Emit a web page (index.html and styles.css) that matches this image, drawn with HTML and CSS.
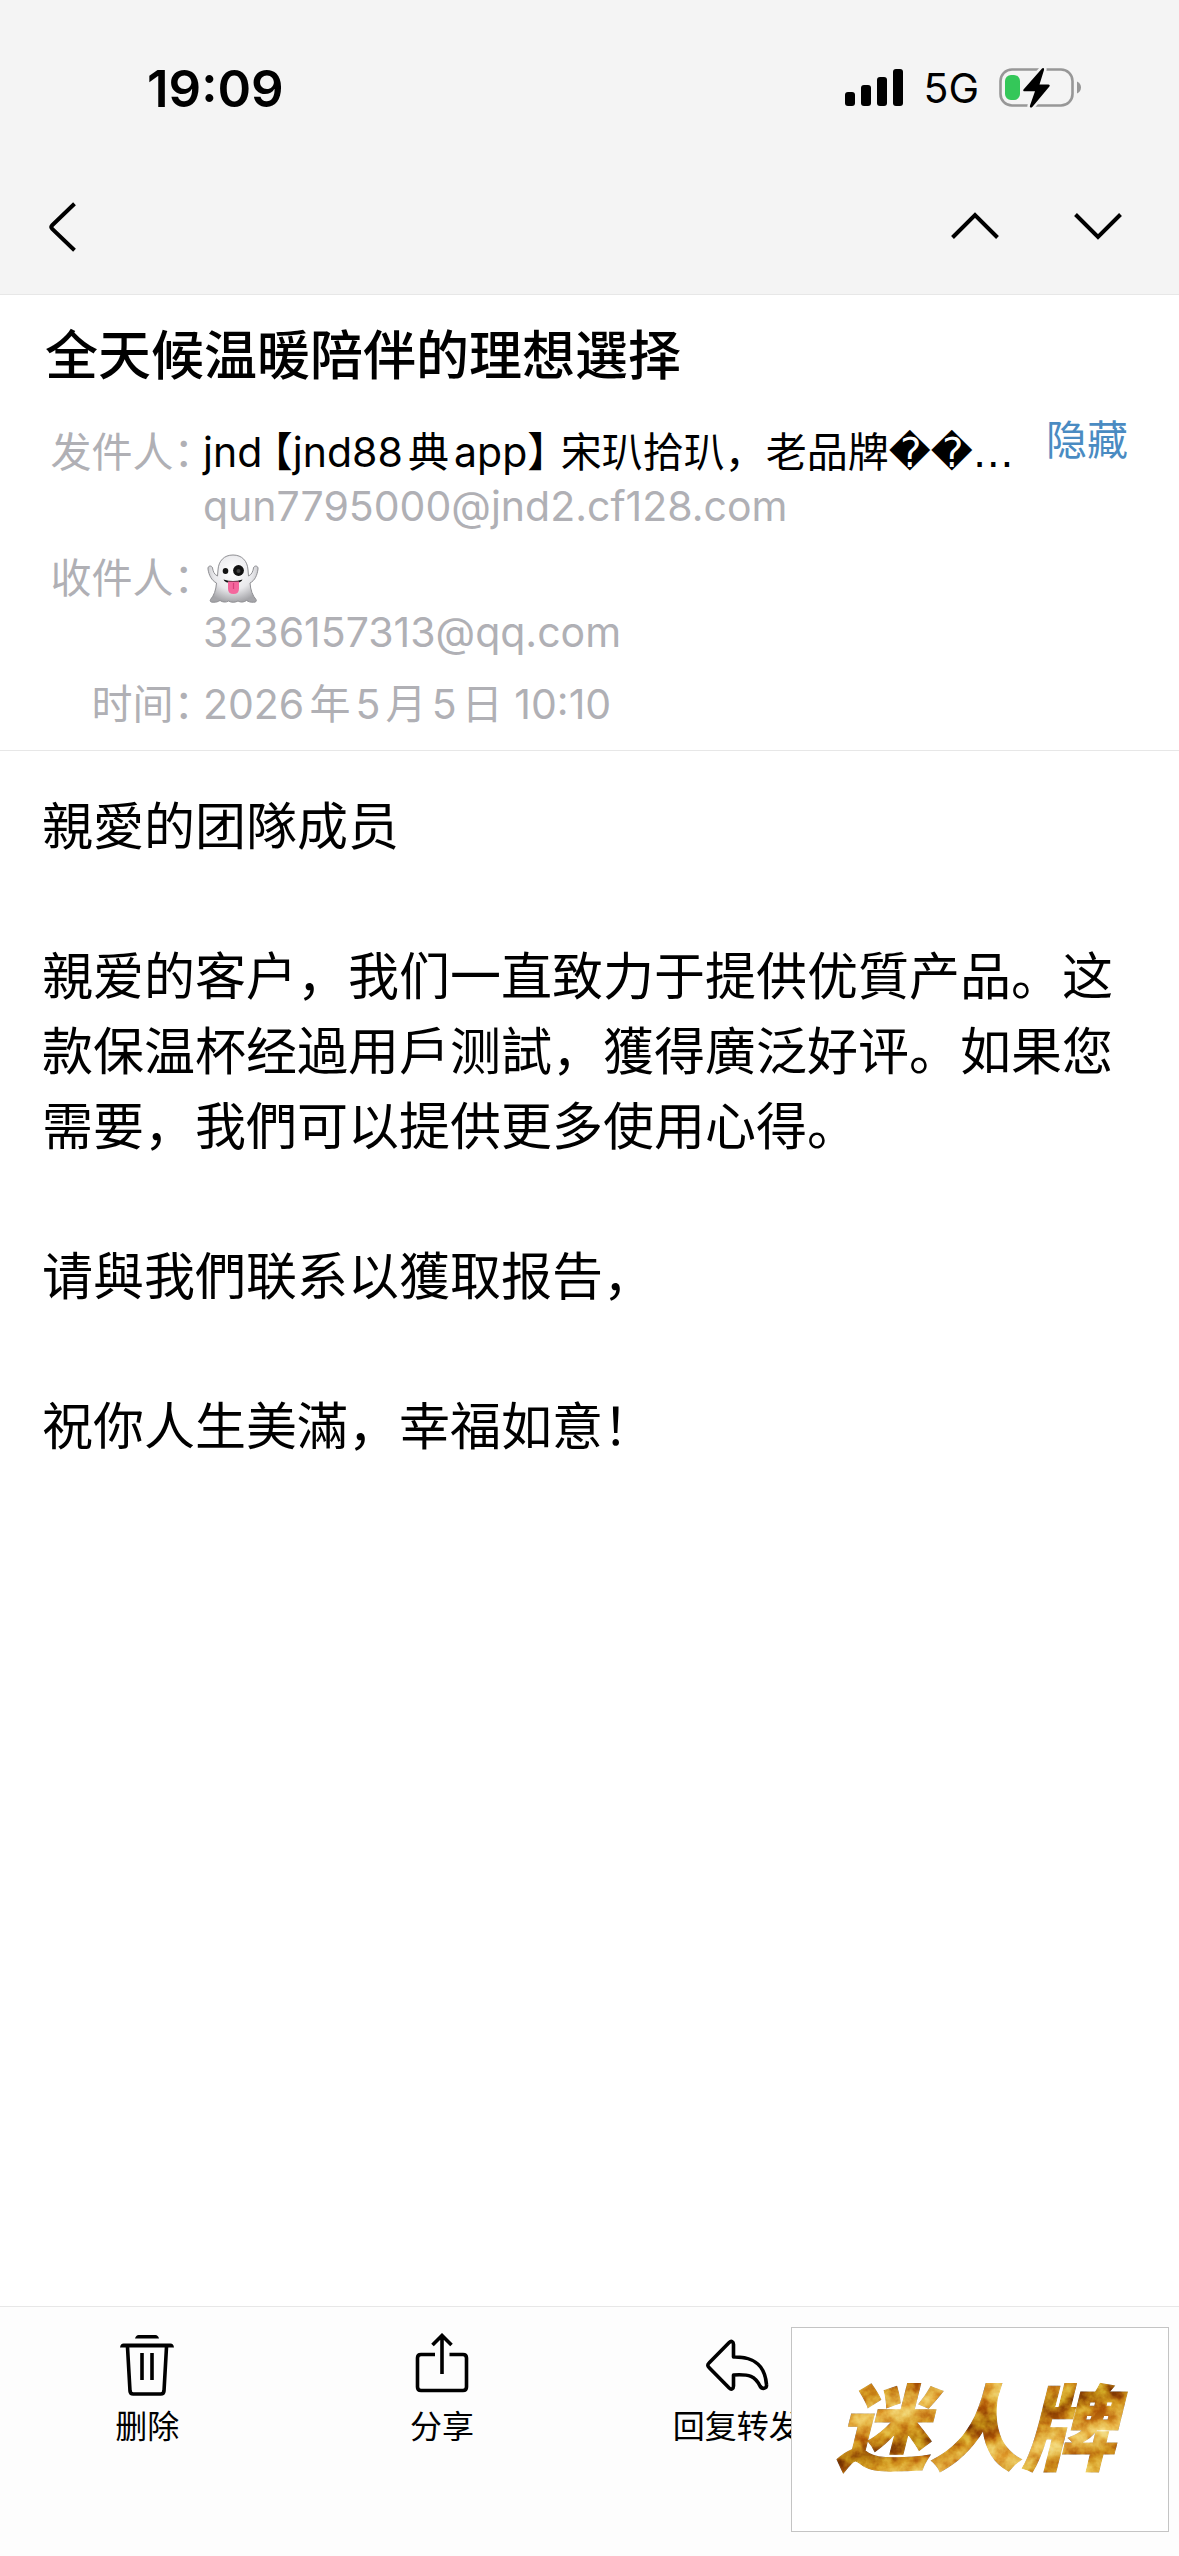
FILE: index.html
```html
<!DOCTYPE html>
<html lang="zh-CN">
<head>
<meta charset="utf-8">
<meta name="viewport" content="width=device-width, initial-scale=1">
<title>全天候温暖陪伴的理想選择</title>
<link rel="stylesheet" href="styles.css">
</head>
<body>
<header class="top">
  <div class="status">
    <span class="clock">19:09</span>
    <div class="status-right">
      <svg class="signal" width="58" height="38" viewBox="0 0 58 38" aria-hidden="true">
        <rect x="0" y="23" width="10" height="14" rx="3"/>
        <rect x="16" y="16" width="10" height="21" rx="3"/>
        <rect x="32" y="8" width="10" height="29" rx="3"/>
        <rect x="48" y="0" width="10" height="37" rx="3"/>
      </svg>
      <span class="network">5G</span>
      <svg class="battery" width="82" height="42" viewBox="0 0 82 42" aria-hidden="true">
        <rect x="1.5" y="2.5" width="72" height="36" rx="11.5" fill="none" stroke="#979797" stroke-width="2.6"/>
        <path d="M78 14.500c2.400 1 4 3.200 4 6s-1.600 5-4 6z" fill="#979797"/>
        <rect x="6" y="8" width="15" height="25" rx="6" fill="#34c759"/>
        <path d="M43 1.500 24.500 22.500c-.8 1 0 1.800 1 1.800h10.500L31 38.500c-.6 2 1 2.800 2.300 1.400L50.400 19.500c.8-1 .2-2-1-2H40.500L45 3c.5-1.800-.8-2.700-2-1.500z" fill="#000" stroke="#f4f4f4" stroke-width="5" paint-order="stroke"/>
      </svg>
    </div>
  </div>
  <nav class="nav">
    <button class="icon-btn" type="button" aria-label="返回">
      <svg width="30" height="50" viewBox="0 0 30 50"><path d="M26.500 1.800 4.200 23.200q-1.800 1.800 0 3.600L26.500 48.200" fill="none" stroke="#000" stroke-width="4"/></svg>
    </button>
    <div class="pager">
      <button class="icon-btn" type="button" aria-label="上一封">
        <svg width="48" height="28" viewBox="0 0 48 28"><path d="M1.500 25.500 24 3l22.500 22.500" fill="none" stroke="#000" stroke-width="4"/></svg>
      </button>
      <button class="icon-btn" type="button" aria-label="下一封">
        <svg width="48" height="28" viewBox="0 0 48 28"><path d="M1.500 2.500 24 25 46.500 2.500" fill="none" stroke="#000" stroke-width="4"/></svg>
      </button>
    </div>
  </nav>
</header>

<main class="mail">
  <section class="head">
    <h1 class="subject">全天候温暖陪伴的理想選择</h1>
    <div class="meta">
      <dl class="fields">
        <dt>发件人<span class="colon">：</span></dt>
        <dd><span class="name">jnd<span class="bracket open">【</span>jnd88典app<span class="bracket close">】</span>宋玐拾玐，老品牌<span class="unknown">��…</span></span><span class="addr">qun7795000@jnd2.cf128.com</span></dd>
        <dt>收件人<span class="colon">：</span></dt>
        <dd>
          <span class="avatar">
            <svg width="56" height="50" viewBox="0 0 56 50" role="img" aria-label="鬼魂">
              <defs>
                <radialGradient id="ghost" cx="50%" cy="35%" r="65%"><stop offset="0" stop-color="#fff"/><stop offset=".6" stop-color="#e9e9ec"/><stop offset="1" stop-color="#a5a5a9"/></radialGradient>
              </defs>
              <path d="M28 1c-9 0-14.500 6-15 15l-.5 6C9 20.500 8 17 7.500 14c-.6-3-5-2.500-4.500 1 .8 6 3.500 11.500 8.500 14C11 36 9 41.500 5.500 45.500c-1 1.800.5 3 2.500 2.700 3.500.3 5-.7 7-1.700 3 2 6 2 8.500.5 3 1.700 6.500 1.700 9.500 0 2.500 1.500 5.500 1.500 8.500-.5 2 1 3.500 2 7 1.700 2 .3 3.500-.9 2.500-2.700C47.500 41.500 45.500 36 45 29c5-2.500 7.200-8 8-14 .5-3.500-3.900-4-4.500-1-.5 3-1.500 6.500-5 8l-.5-6C42.500 7 37 1 28 1z" fill="url(#ghost)" stroke="#8f8f93" stroke-width="1"/>
              <ellipse cx="20.500" cy="17" rx="2.800" ry="3" fill="#111"/>
              <circle cx="33.500" cy="16.500" r="5.400" fill="#111"/>
              <circle cx="33.500" cy="17" r="2" fill="#444"/>
              <path d="M18.500 25.500q9.500 3 19 0-1 3.500-9.500 3.500t-9.500-3.500z" fill="#111"/>
              <path d="M23 27.500h11v7q0 5.500-5.500 5.500T23 34.500z" fill="#f4679d"/>
              <path d="M28.500 29v6" stroke="#d83f7c" stroke-width="1.200"/>
            </svg>
          </span>
          <span class="addr">3236157313@qq.com</span>
        </dd>
        <dt>时间<span class="colon">：</span></dt>
        <dd><time class="addr" datetime="2026-05-05T10:10">2026年5月5日 10:10</time></dd>
      </dl>
      <button class="toggle" type="button">隐藏</button>
    </div>
  </section>

  <article class="body">
    <p>親愛的团隊成员</p>
    <p>親爱的客户，我们一直致力于提供优質产品。这款保温杯经過用戶测試，獲得廣泛好评。如果您需要，我們可以提供更多使用心得。</p>
    <p>请與我們联系以獲取报告，</p>
    <p>祝你人生美滿，幸福如意！</p>
  </article>
</main>

<footer class="toolbar">
  <button class="tool" type="button">
    <svg width="64" height="64" viewBox="0 0 64 64" fill="none" stroke="#000" stroke-width="3.600">
      <path d="M20 5.500q1-3.500 3.500-3.500h17q2.500 0 3.500 3.500z" fill="#000" stroke="none"/>
      <path d="M5 14.500q.5-4 3.500-4h47q3 0 3.500 4z" fill="#000" stroke="none"/>
      <path d="M12.500 14l2.500 44q.3 3 3.200 3h27.600q2.900 0 3.200-3L51.500 14"/>
      <path d="M27 20v27M37 20v27"/>
    </svg>
    <span>删除</span>
  </button>
  <button class="tool" type="button">
    <svg width="64" height="64" viewBox="0 0 64 64" fill="none" stroke="#000" stroke-width="3.600">
      <path d="M25 21.500H11q-3.500 0-3.500 3.500v29q0 3.500 3.500 3.500h42q3.500 0 3.500-3.500V25q0-3.500-3.500-3.500H39.500"/>
      <path d="M32 41V3M22.500 12 32 2.500 41.500 12"/>
    </svg>
    <span>分享</span>
  </button>
  <button class="tool" type="button">
    <svg width="64" height="64" viewBox="0 0 64 64" fill="none" stroke="#000" stroke-width="3.600" stroke-linejoin="round">
      <path d="M28.500 24V11.500c0-3-2.200-4-4.300-2L4 30q-2.400 2.200 0 4.400L24.200 55c2.100 2 4.300 1 4.300-2V42c16-1 21.500 1 26.500 11 2 3.500 7 3 6.500-1.500C60 33.500 51 23.500 28.500 24z"/>
    </svg>
    <span>回复转发</span>
  </button>
</footer>

<aside class="badge">
  <svg class="badge-art" width="310" height="110" viewBox="0 0 310 110">
    <defs>
      <linearGradient id="gold" x1="0" y1="0" x2=".35" y2=".6" spreadMethod="reflect">
        <stop offset="0" stop-color="#b47c16"/><stop offset=".25" stop-color="#dfac40"/><stop offset=".45" stop-color="#c4841b"/><stop offset=".65" stop-color="#edc566"/><stop offset=".85" stop-color="#cc8e22"/><stop offset="1" stop-color="#a8700f"/>
      </linearGradient>
      <filter id="foil" x="0" y="0" width="100%" height="100%" color-interpolation-filters="sRGB">
        <feTurbulence type="fractalNoise" baseFrequency=".06" numOctaves="4" seed="7"/>
        <feColorMatrix values="2 0 0 0 -.45  2 0 0 0 -.52  1.600 0 0 0 -.42  0 0 0 0 1" result="noise"/>
        <feBlend in="noise" in2="SourceGraphic" mode="soft-light"/>
        <feComposite in2="SourceAlpha" operator="in"/>
      </filter>
    </defs>
    <text class="badge-text" x="11" y="88" fill="url(#gold)" stroke="url(#gold)" filter="url(#foil)">迷人牌</text>
  </svg>
</aside>
</body>
</html>
```
FILE: styles.css
```css
* {
  box-sizing: border-box;
}

body {
  margin: 0;
  min-height: 100vh;
  display: flex;
  flex-direction: column;
  background: #fff;
  color: #000;
  font-family: Inter, "Noto Sans CJK SC", sans-serif;
}

button {
  border: 0;
  padding: 0;
  background: none;
  color: inherit;
  font: inherit;
}

svg {
  display: block;
}

/* Status bar and navigation */
.top {
  background: #f4f4f4;
  border-bottom: 1px solid #e7e7e7;
}

.status {
  display: flex;
  align-items: center;
  justify-content: space-between;
  height: 176px;
  padding: 0 98px 0 147px;
}

.clock {
  font-size: 51px;
  font-weight: 600;
}

.status-right {
  display: flex;
  align-items: center;
  gap: 20px;
}

.network {
  font-size: 41px;
}

.nav {
  display: flex;
  align-items: flex-start;
  justify-content: space-between;
  height: 118px;
  padding: 26px 57px 0 48px;
}

.pager {
  display: flex;
  gap: 75px;
  padding-top: 10px;
}

/* Message header */
.mail {
  flex: 1;
}

.head {
  padding: 23px 42px 19px 43px;
  border-bottom: 1px solid #e7e7e7;
}

.subject {
  margin: 0 0 30px;
  padding-left: 2px;
  font-size: 53px;
  font-weight: 500;
  line-height: 77px;
}

.meta {
  display: flex;
  align-items: flex-start;
  font-size: 41px;
  line-height: 54px;
}

.fields {
  flex: 1;
  min-width: 0;
  margin: 0;
  display: grid;
  grid-template-columns: 151px minmax(0, 1fr);
  gap: 18px 9px;
  color: #b0b0b5;
  text-autospace: normal;
}

.fields dt {
  text-align: right;
  white-space: nowrap;
}

.fields dd {
  margin: 0;
}

.colon,
.bracket {
  font-family: "Noto Sans CJK SC", sans-serif;
  font-feature-settings: "halt";
  line-height: 1;
}

.open {
  margin-left: 10px;
}

.close {
  margin-right: 13px;
}

.unknown {
  font-family: "DejaVu Sans", sans-serif;
  line-height: 1;
}

.name,
.addr,
.avatar {
  display: block;
  height: 54px;
}

.name {
  color: #000;
  white-space: nowrap;
}

.avatar {
  padding: 3px 0 0 2px;
}

.toggle {
  margin: -12px 9px 0 20px;
  color: #4a8bc2;
}

/* Message text */
.body {
  padding: 38px 42px;
  font-size: 51px;
  line-height: 75px;
}

.body p {
  margin: 0 0 75px;
}

/* Bottom actions */
.toolbar {
  display: grid;
  grid-template-columns: repeat(4, 1fr);
  height: 250px;
  padding-top: 26px;
  border-top: 1px solid #e7e7e7;
  background: #fdfdfd;
}

.tool {
  display: flex;
  flex-direction: column;
  align-items: center;
  gap: 8px;
  font-size: 32px;
  line-height: 44px;
}

.badge {
  position: fixed;
  right: 10px;
  bottom: 24px;
  display: flex;
  align-items: center;
  justify-content: center;
  width: 378px;
  height: 205px;
  border: 1px solid #c4c4c4;
  background: #fff;
}

.badge-text {
  font-family: "Noto Sans CJK SC", sans-serif;
  font-size: 93px;
  font-weight: 900;
  font-style: italic;
  stroke-width: 1px;
}
```
